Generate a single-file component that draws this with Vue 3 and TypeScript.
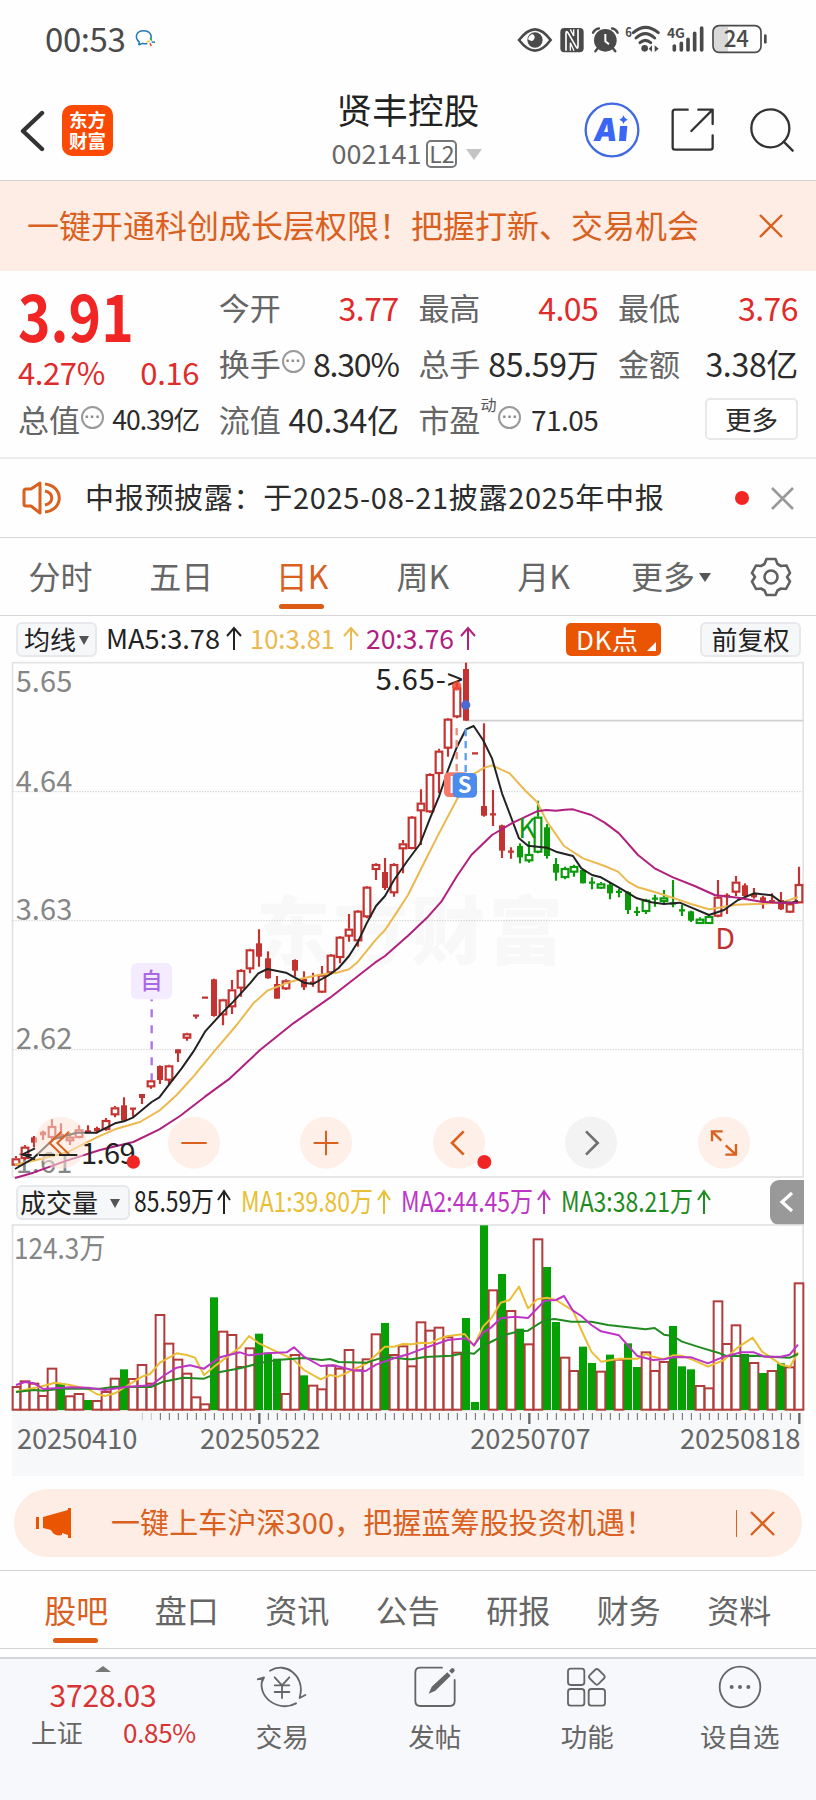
<script setup lang="ts">
type Candle = [string, number, number, number, number]
type Pt = [number, number]

// kind: h hollow, f filled, c cross; g prefix means falling colour. Values: high, body top, body bottom, low.
const early: Candle[] = [
  ['h', 918, 925, 945, 948], ['h', 885, 890, 925, 930], ['f', 858, 862, 878, 892], ['f', 842, 845, 856, 870],
  ['h', 808, 828, 862, 870], ['f', 820, 852, 866, 870], ['h', 850, 860, 872, 885], ['h', 826, 838, 862, 865],
  ['c', 826, 842, 846, 850], ['f', 830, 834, 844, 850], ['h', 804, 810, 838, 842], ['h', 768, 772, 794, 802],
  ['f', 742, 766, 812, 812], ['c', 774, 774, 778, 800], ['f', 732, 732, 744, 762], ['h', 690, 691, 710, 716],
  ['f', 646, 648, 690, 702], ['h', 644, 646, 690, 706], ['f', 598, 598, 610, 636], ['h', 548, 550, 564, 572],
  ['c', 494, 495, 499, 506], ['c', 441, 441, 445, 445], ['f', 386, 388, 498, 500], ['h', 446, 448, 494, 526],
  ['h', 390, 418, 470, 492], ['h', 358, 360, 414, 440], ['h', 296, 298, 356, 370], ['f', 238, 280, 320, 350],
  ['f', 304, 325, 385, 386], ['f', 378, 402, 446, 446], ['h', 388, 391, 416, 420], ['f', 328, 330, 362, 380],
  ['f', 364, 386, 412, 420], ['c', 368, 395, 400, 410], ['h', 348, 374, 426, 428], ['h', 312, 314, 368, 374],
  ['h', 258, 260, 322, 340], ['h', 192, 236, 258, 275], ['h', 180, 182, 272, 290], ['h', 108, 110, 200, 205],
  ['h', 40, 42, 58, 90], ['f', 24, 66, 114, 120], ['h', 40, 42, 128, 140], ['h', -30, -20, -4, 70],
]
const late: Candle[] = [
  ['h', 648, 650, 745, 748], ['h', 568, 608, 632, 735], ['h', 520, 522, 635, 638], ['h', 446, 452, 520, 580],
  ['h', 354, 356, 444, 470], ['h', 248, 262, 350, 355], ['f', 188, 207, 362, 362], ['c', 458, 458, 462, 462],
  ['f', 370, 618, 647, 650], ['c', 570, 641, 645, 678], ['f', 674, 676, 752, 774], ['c', 742, 753, 757, 776],
  ['gf', 730, 738, 772, 790], ['gh', 724, 762, 782, 788], ['gh', 602, 650, 756, 760], ['gf', 672, 682, 768, 776],
  ['gf', 774, 792, 818, 842], ['gh', 800, 804, 832, 838], ['gh', 794, 798, 816, 830], ['gf', 808, 810, 850, 850],
  ['gc', 832, 846, 850, 868], ['gh', 846, 850, 864, 866], ['gf', 848, 854, 880, 898], ['gc', 866, 873, 878, 892],
  ['gf', 874, 876, 930, 942], ['gc', 920, 934, 938, 948], ['gh', 896, 899, 934, 942], ['gc', 884, 894, 898, 920],
  ['gh', 870, 892, 904, 910], ['gf', 840, 907, 914, 922], ['gc', 914, 928, 934, 948], ['gf', 932, 934, 962, 966],
  ['gh', 952, 956, 970, 972], ['gh', 944, 948, 970, 972], ['h', 840, 890, 948, 952], ['f', 880, 884, 892, 942],
  ['h', 828, 845, 876, 888], ['f', 850, 856, 888, 890], ['f', 864, 882, 892, 896], ['f', 888, 892, 904, 926],
  ['c', 880, 900, 906, 912], ['f', 876, 900, 928, 930], ['h', 905, 910, 936, 938], ['h', 800, 852, 908, 910],
]
const candles = [...early, ...late].map((c, i) => {
  const dy = i < 44 ? 960 : 210
  const green = c[0].startsWith('g')
  return {
    x: 48 + i * 27,
    shape: c[0].slice(-1),
    color: green ? '#0a9a0a' : '#c23331',
    hi: c[1] + dy, top: c[2] + dy, bot: c[3] + dy, lo: c[4] + dy,
  }
})

const vol = [590, 573, 580, 617, 535, 580, 618, 611, 630, 632, 605, 565, 538, 566, 524, 580, 374, 460, 508, 550, 621, 642,
  322, 424, 434, 530, 474, 431, 488, 506, 611, 494, 556, 586, 597, 526, 535, 479, 540, 507, 432, 399, 494, 468,
  528, 396, 421, 412, 441, 487, 384, 636, 106, 300, 252, 362, 416, 462, 147, 231, 396, 502, 542, 470, 519, 544, 494, 508,
  460, 531, 486, 542, 515, 408, 529, 538, 587, 594, 333, 461, 405, 492, 518, 549, 542, 520, 531, 279]
const falling = new Set([5, 8, 12, 22, 27, 28, 29, 32, 41, 50, 51, 52, 54, 56, 59, 60, 63, 64, 66, 68, 69, 73, 74, 75, 81, 83, 85])

const join = (a: Pt[], b: Pt[], da: number, db: number) =>
  [...a.map(([x, y]) => `${x},${y + da}`), ...b.map(([x, y]) => `${x + 1224},${y + db}`)].join(' ')

const ma5 = join(
  [[45, 957], [100, 925], [160, 868], [230, 848], [290, 848], [345, 820], [372, 814], [400, 802], [455, 756], [478, 742], [510, 700], [545, 655], [580, 605], [615, 545], [665, 490], [700, 455], [750, 400], [775, 370], [802, 357], [858, 368], [912, 398], [939, 402], [985, 376], [1016, 354], [1047, 318], [1074, 275], [1101, 218], [1128, 168], [1155, 138], [1182, 90]],
  [[0, 780], [36, 732], [66, 655], [93, 590], [120, 510], [147, 440], [174, 388], [197, 378], [225, 420], [252, 475], [282, 580], [333, 715], [360, 737], [417, 743], [444, 755], [495, 768], [520, 805], [552, 825], [579, 832], [633, 863], [687, 895], [730, 907], [768, 912], [815, 908], [849, 922], [903, 945], [948, 930], [990, 900], [1038, 880], [1092, 886], [1119, 906], [1150, 908], [1170, 903]], 960, 210)
const ma10 = join(
  [[45, 945], [130, 925], [200, 908], [290, 862], [345, 838], [420, 816], [478, 782], [530, 735], [580, 680], [640, 607], [710, 525], [760, 460], [802, 422], [858, 400], [912, 384], [960, 374], [1010, 368], [1047, 358], [1074, 335], [1128, 268], [1155, 240], [1182, 200]],
  [[0, 885], [60, 765], [93, 700], [147, 598], [175, 545], [200, 520], [225, 505], [252, 496], [305, 520], [350, 570], [387, 606], [417, 665], [468, 738], [525, 775], [590, 798], [630, 815], [660, 845], [690, 862], [740, 876], [800, 895], [849, 912], [903, 928], [950, 920], [984, 914], [1065, 911], [1130, 905], [1170, 891]], 960, 210)
const ma20 = join(
  [[45, 984], [100, 968], [200, 932], [300, 900], [400, 876], [478, 838], [540, 798], [615, 740], [690, 685], [780, 600], [880, 520], [990, 443], [1074, 378], [1125, 338], [1155, 318]],
  [[0, 1007], [60, 950], [100, 905], [147, 828], [190, 765], [252, 705], [315, 668], [387, 634], [415, 630], [444, 632], [470, 629], [495, 628], [550, 645], [590, 668], [633, 700], [690, 765], [740, 805], [795, 832], [860, 858], [920, 885], [990, 893], [1060, 905], [1119, 909], [1170, 908]], 960, 210)
const vma1 = join(
  [[48, 605], [120, 590], [165, 578], [210, 585], [264, 597], [290, 612], [315, 618], [345, 610], [385, 585], [426, 560], [450, 552], [480, 518], [530, 490], [560, 495], [585, 503], [612, 555], [642, 530], [720, 472], [747, 438], [777, 460], [830, 485], [880, 508], [912, 540], [962, 568], [990, 555], [1016, 560], [1047, 545], [1101, 520], [1155, 470], [1182, 470], [1209, 462]],
  [[12, 463], [39, 458], [66, 460], [93, 446], [120, 438], [170, 432], [198, 468], [225, 410], [252, 382], [278, 338], [305, 330], [333, 290], [360, 355], [387, 328], [417, 323], [444, 330], [495, 362], [520, 420], [550, 485], [579, 515], [633, 506], [690, 506], [714, 492], [735, 500], [768, 508], [795, 496], [822, 497], [860, 512], [900, 530], [948, 510], [990, 472], [1034, 443], [1062, 485], [1092, 505], [1119, 524], [1146, 530], [1170, 487]], 0, 0)
const vma2 = join(
  [[48, 585], [75, 576], [102, 580], [130, 597], [210, 592], [264, 593], [315, 600], [385, 590], [453, 586], [490, 558], [530, 533], [570, 526], [612, 536], [660, 502], [720, 487], [747, 496], [800, 490], [860, 487], [882, 472], [912, 500], [962, 528], [1000, 526], [1060, 541], [1097, 543], [1128, 524], [1182, 505]],
  [[0, 493], [39, 478], [120, 450], [174, 445], [198, 466], [225, 428], [250, 412], [278, 385], [320, 380], [360, 384], [410, 332], [444, 330], [468, 318], [495, 362], [520, 378], [550, 405], [579, 424], [633, 436], [687, 497], [735, 510], [768, 508], [800, 501], [850, 502], [900, 520], [948, 500], [1000, 487], [1038, 487], [1070, 500], [1119, 500], [1145, 494], [1170, 464]], 0, 0)
const vma3 = join(
  [[48, 606], [102, 600], [130, 602], [183, 596], [300, 596], [345, 590], [453, 591], [490, 575], [550, 563], [612, 566], [660, 546], [720, 535], [777, 520], [830, 510], [912, 504], [965, 510], [990, 507], [1016, 516], [1100, 518], [1155, 500]],
  [[0, 508], [12, 508], [50, 501], [130, 497], [174, 488], [198, 491], [225, 468], [260, 450], [300, 432], [333, 424], [360, 422], [410, 390], [440, 387], [490, 395], [550, 395], [600, 405], [660, 412], [712, 418], [740, 414], [768, 434], [795, 438], [822, 455], [876, 472], [930, 488], [955, 498], [1038, 497], [1100, 501], [1146, 503], [1170, 492]], 0, 0)

const ticks = Array.from({ length: 74 }, (_, k) => k + 14)
const priceLabels = [['5.65', 487], ['4.64', 787], ['3.63', 1170], ['2.62', 1557], ['1.61', 1930]] as const
const dates = [['20250410', 54], ['20250522', 603], ['20250707', 1414], ['20250818', 2043]] as const
const periods = ['分时', '五日', '日K', '周K', '月K']
const sections = ['股吧', '盘口', '资讯', '公告', '研报', '财务', '资料']
</script>

<template>
  <main class="page">
    <div class="status">
      <span class="clock">00:53</span>
      <svg class="chat" width="22" height="20" viewBox="0 0 66 60" fill="none" stroke-width="4.5">
        <path d="M14 48L16 40C-2 22 10 5 29 5S56 20 49 32M14 48L26 43Q34 46 40 43" stroke="#2479b8" />
        <path d="M49 26l4 9" stroke="#45a83b" /><path d="M53 39l10 1" stroke="#2479b8" />
        <path d="M38 38l10-1" stroke="#f2c230" /><path d="M48 42l4 10" stroke="#e05a2b" />
      </svg>
      <svg class="sys" width="316" height="66" viewBox="0 0 948 198" fill="#4a4a4a">
        <path d="M57 90Q82 58 105 58T152 90Q128 122 105 122T57 90Z" fill="none" stroke="#4a4a4a" stroke-width="8" />
        <circle cx="105" cy="90" r="23" /><path d="M84 88Q98 98 102 88Q108 80 98 72Q86 76 84 88Z" fill="#fff" />
        <rect x="181" y="54" width="70" height="73" rx="12" />
        <path d="M198 122V70Q198 60 205 70L228 110Q234 120 234 108V58" fill="none" stroke="#fff" stroke-width="5" />
        <path d="M211 58L221 78V58M211 122V98L222 122" fill="none" stroke="#fff" stroke-width="4" />
        <circle cx="316" cy="91" r="34" /><path d="M316 72V94L327 103" fill="none" stroke="#fff" stroke-width="6" />
        <path d="M279 68Q284 57 297 55M336 55Q348 57 353 68M294 114L286 124M338 114L346 124" fill="none" stroke="#4a4a4a" stroke-width="7" stroke-linecap="round" />
        <text x="376" y="82" font-size="38" font-weight="700" textLength="20" lengthAdjust="spacingAndGlyphs">6</text>
        <g fill="none" stroke="#4a4a4a" stroke-width="9" stroke-linecap="round">
          <path d="M400 68Q436 36 475 68M408 84Q436 58 464 84M420 98Q436 84 452 98" />
        </g>
        <circle cx="434" cy="115" r="10" /><path d="M456 106v20l-10-10zM464 106v20l12-10z" />
        <text x="501" y="83" font-size="40" font-weight="700" textLength="54" lengthAdjust="spacingAndGlyphs">4G</text>
        <g stroke="#4a4a4a" stroke-width="11" stroke-linecap="round"><path d="M523 108V120M544 100V120M564 88V120M584 70V120M605 54V120" /></g>
        <path d="M650 50H684V125H650Q640 125 640 112V62Q640 50 650 50Z" fill="#d9d9d9" />
        <rect x="639" y="47" width="144" height="80" rx="18" fill="none" stroke="#4a4a4a" stroke-width="5" />
        <path d="M796 77V97" stroke="#4a4a4a" stroke-width="8" stroke-linecap="round" />
        <text x="671" y="112" font-size="69" font-weight="500" textLength="76" lengthAdjust="spacingAndGlyphs">24</text>
      </svg>
    </div>

    <header class="head">
      <div class="head-left">
        <svg width="25" height="42" viewBox="0 0 25 42" fill="none" stroke="#333" stroke-width="4.4" stroke-linecap="round" stroke-linejoin="round"><path d="M22 3L3 21L22 39" /></svg>
        <div class="logo"><span>东方</span><span>财富</span></div>
      </div>
      <div class="title">
        <h1>贤丰控股</h1>
        <p><span>002141</span><b>L2</b><i></i></p>
      </div>
      <div class="head-right">
        <svg width="56" height="56" viewBox="0 0 168 168">
          <circle cx="84" cy="84" r="79" fill="none" stroke="#4169e1" stroke-width="7" />
          <text x="30" y="116" font-size="92" font-weight="900" font-style="italic" font-family="Inter, sans-serif" fill="#3b66f5" textLength="70" lengthAdjust="spacingAndGlyphs">A</text>
          <path d="M108 72H130L126 117H105Z M119 40Q121 50 132 53Q121 56 119 66Q116 56 106 53Q116 50 119 40Z" fill="#3b66f5" />
        </svg>
        <svg width="44" height="44" viewBox="0 0 132 132" fill="none" stroke="#333" stroke-width="7" stroke-linecap="round" stroke-linejoin="round"><path d="M50 5H12Q5 5 5 12V118Q5 125 12 125H118Q125 125 125 118V82M82 5H125V48M125 5L61 69" /></svg>
        <svg width="46" height="46" viewBox="0 0 138 138" fill="none" stroke="#333" stroke-width="7" stroke-linecap="round"><circle cx="64" cy="64" r="57" /><path d="M104 104L131 131" /></svg>
      </div>
    </header>

    <div class="banner">
      <span>一键开通科创成长层权限！把握打新、交易机会</span>
      <svg width="24" height="24" viewBox="0 0 24 24" stroke="#d9601f" stroke-width="2.4"><path d="M1 1L23 23M23 1L1 23" /></svg>
    </div>

    <section class="quote">
      <div class="main-price">
        <div class="big"><span>3.91</span></div>
        <div class="delta"><span>4.27%</span><span>0.16</span></div>
      </div>
      <div class="cell"><label>今开</label><em class="red">3.77</em></div>
      <div class="cell"><label>最高</label><em class="red">4.05</em></div>
      <div class="cell"><label>最低</label><em class="red">3.76</em></div>
      <div class="cell"><label>换手</label><i class="more-dot">···</i><em class="pct">8.30%</em></div>
      <div class="cell"><label>总手</label><em>85.59万</em></div>
      <div class="cell"><label>金额</label><em>3.38亿</em></div>
      <div class="cell"><label>总值</label><i class="more-dot">···</i><em class="small">40.39亿</em></div>
      <div class="cell"><label>流值</label><em>40.34亿</em></div>
      <div class="cell"><label>市盈</label><sup>动</sup><i class="more-dot">···</i><em class="small pe">71.05</em></div>
      <div class="cell end"><button class="more">更多</button></div>
    </section>

    <section class="notice">
      <svg width="40" height="34" viewBox="0 0 40 34" fill="none" stroke="#d9601f" stroke-width="3" stroke-linejoin="round"><path d="M2 10Q2 8 4 8H9L18 2V32L9 25H4Q2 25 2 23ZM23 3C42 5 42 29 23 31M23 10C32 12 32 22 23 24" /></svg>
      <span>中报预披露：于2025-08-21披露2025年中报</span>
      <i></i>
      <svg width="23" height="23" viewBox="0 0 23 23" stroke="#999" stroke-width="2.6"><path d="M1 1L22 22M22 1L1 22" /></svg>
    </section>

    <nav class="periods">
      <span v-for="p in periods" :key="p" :class="{ on: p === '日K' }">{{ p }}</span>
      <span class="drop">更多<i></i></span>
      <svg width="42" height="42" viewBox="0 0 42 42" fill="none" stroke="#606060" stroke-width="2.6" stroke-linejoin="round">
        <path d="M16.5 3H25.5L27.5 8L31 10L36.5 9.5L40 17L37 21L40 25.5L36 33L31 32.5L27.5 34.5L25.5 39H16.5L14.5 34.5L11 32.5L6 33L2 25.5L5 21L2 17L6 9.5L11 10L14.5 8Z" /><circle cx="21" cy="21" r="6.5" />
      </svg>
    </nav>

    <div class="ma-row">
      <button class="chip ma-chip">均线<i></i></button>
      <svg class="ma-text" width="380" height="46" viewBox="0 0 380 46" font-size="27">
        <text x="7" y="33" fill="#222" textLength="114" lengthAdjust="spacingAndGlyphs">MA5:3.78</text>
        <text x="151" y="33" fill="#ebb94f" textLength="85" lengthAdjust="spacingAndGlyphs">10:3.81</text>
        <text x="267" y="33" fill="#b0207e" textLength="88" lengthAdjust="spacingAndGlyphs">20:3.76</text>
        <g fill="none" stroke-width="2"><path d="M135 34V12M128 20L135 12L142 20" stroke="#222" /><path d="M252 34V12M245 20L252 12L259 20" stroke="#ebb94f" /><path d="M369 34V12M362 20L369 12L376 20" stroke="#b0207e" /></g>
      </svg>
      <button class="dk">DK点<i></i></button>
      <button class="chip adj">前复权</button>
    </div>

    <svg class="kline" width="816" height="520" viewBox="0 390 2448 1560">
      <text x="768" y="1284" font-size="222" font-weight="900" fill="#f8f8f8" textLength="920">东方财富</text>
      <rect x="37.500" y="398" width="2372" height="1543" fill="none" stroke="#e3e3e3" stroke-width="5" />
      <path d="M38 785H2408M38 1172H2408M38 1559H2408" stroke="#cfcfcf" stroke-width="3" stroke-dasharray="4 4" />
      <path d="M1398 572H2408" stroke="#cfcfcf" stroke-width="5" />
      <g font-size="87" fill="#868686"><text v-for="l in priceLabels" :key="l[0]" x="47" :y="l[1]" textLength="170">{{ l[0] }}</text></g>
      <g v-for="(c, i) in candles" :key="i" :stroke="c.color" stroke-width="6.500">
        <template v-if="c.shape === 'h'">
          <path :d="`M${c.x} ${c.hi}V${c.top}M${c.x} ${c.bot}V${c.lo}`" />
          <rect :x="c.x - 10" :y="c.top + 3" width="20" :height="Math.max(c.bot - c.top - 4, 7)" fill="#fff" />
        </template>
        <template v-else-if="c.shape === 'f'">
          <path :d="`M${c.x} ${c.hi}V${c.lo}`" />
          <rect :x="c.x - 9" :y="c.top" width="18" :height="c.bot - c.top" :fill="c.color" stroke="none" />
        </template>
        <path v-else :d="`M${c.x} ${c.hi}V${c.lo}M${c.x - 9} ${(c.top + c.bot) / 2}H${c.x + 9}`" />
      </g>
      <g fill="none" stroke-linejoin="round" stroke-width="6">
        <polyline :points="ma10" stroke="#ebb94f" /><polyline :points="ma5" stroke="#222" /><polyline :points="ma20" stroke="#b0207e" />
      </g>
      <text x="1127" y="480" font-size="87" fill="#222" textLength="262">5.65-&gt;</text>
      <circle cx="1370" cy="468" r="14" fill="#f2452f" opacity=".85" /><circle cx="1397" cy="525" r="14" fill="#4a6bd4" />
      <path d="M1370 594V728" stroke="#f08a78" stroke-width="7" stroke-dasharray="22 14" />
      <path d="M1397 597V728" stroke="#5b9df0" stroke-width="7" stroke-dasharray="22 14" />
      <rect x="1332" y="727" width="72" height="74" rx="14" fill="#f57a68" />
      <text x="1346" y="788" font-size="66" font-weight="700" fill="#fff">B</text>
      <rect x="1358" y="729" width="73" height="74" rx="14" fill="#4b8cec" />
      <text x="1373" y="788" font-size="66" font-weight="700" fill="#fff">S</text>
      <text x="1555" y="924" font-size="82" fill="#0a9a0a">K</text>
      <text x="2146" y="1256" font-size="86" fill="#bd3331">D</text>
      <path d="M455 1408V1650" stroke="#ac73e6" stroke-width="7" stroke-dasharray="24 24" stroke-dashoffset="18" />
      <rect x="393" y="1299" width="123" height="109" rx="18" fill="#f5ebff" />
      <text x="421" y="1376" font-size="67" font-weight="500" fill="#a968e6">自</text>
      <g fill="#fde4d6" fill-opacity=".55">
        <circle cx="182" cy="1838" r="78" /><circle cx="582" cy="1838" r="78" /><circle cx="978" cy="1838" r="78" /><circle cx="1377" cy="1838" r="78" /><circle cx="2172" cy="1838" r="78" />
      </g>
      <circle cx="1773" cy="1838" r="78" fill="#f3f3f3" />
      <g fill="none" stroke="#d9601f" stroke-width="6">
        <path d="M184 1805L149 1839L184 1873M207 1805L172 1839L207 1873" />
        <path d="M544 1839H620M941 1839H1015M978 1802V1876" /><path d="M1391 1804L1356 1839L1391 1874" stroke-width="8" />
        <path d="M2136 1834V1804H2168M2136 1804L2164 1832M2177 1846L2208 1874M2176 1874H2208V1842" stroke-width="7" />
      </g>
      <path d="M1758 1804L1793 1839L1758 1874" fill="none" stroke="#707070" stroke-width="8" />
      <path d="M105 1855L68 1873L105 1888M68 1875H95M117 1875H165M177 1875H232" fill="none" stroke="#222" stroke-width="6" />
      <text x="243" y="1902" font-size="87" fill="#222" textLength="164">1.69</text>
      <circle cx="400" cy="1896" r="20" fill="#f02524" /><circle cx="1453" cy="1896" r="21" fill="#f02524" />
    </svg>

    <div class="vol-row">
      <button class="chip vol-chip">成交量<i></i></button>
      <svg class="vol-text" width="588" height="44" viewBox="0 0 588 44" font-size="28">
        <text x="3" y="32" fill="#222" textLength="80" lengthAdjust="spacingAndGlyphs">85.59万</text>
        <text x="110" y="32" fill="#eabf35" textLength="132" lengthAdjust="spacingAndGlyphs">MA1:39.80万</text>
        <text x="270" y="32" fill="#bd35c4" textLength="132" lengthAdjust="spacingAndGlyphs">MA2:44.45万</text>
        <text x="430" y="32" fill="#1e8b1e" textLength="132" lengthAdjust="spacingAndGlyphs">MA3:38.21万</text>
        <g fill="none" stroke-width="2"><path d="M93 34V11M87 20L93 11L99 20" stroke="#222" /><path d="M253 34V11M247 20L253 11L259 20" stroke="#eabf35" /><path d="M413 34V11M407 20L413 11L419 20" stroke="#bd35c4" /><path d="M573 34V11M567 20L573 11L579 20" stroke="#1e8b1e" /></g>
      </svg>
      <button class="fold"><svg width="16" height="24" viewBox="0 0 16 24" fill="none" stroke="#fff" stroke-width="3.2"><path d="M13 3L3 12L13 21" /></svg></button>
    </div>

    <svg class="volume" width="816" height="252" viewBox="0 102 2448 756">
      <rect x="36" y="662" width="2376" height="196" fill="#f7f8fa" />
      <rect x="37.500" y="105" width="2372" height="556" fill="none" stroke="#e3e3e3" stroke-width="5" />
      <text x="42" y="207" font-size="87" fill="#868686" textLength="274" lengthAdjust="spacingAndGlyphs">124.3万</text>
      <template v-for="(v, i) in vol" :key="i">
        <rect v-if="falling.has(i)" :x="36 + i * 27" :y="v" width="24" :height="660 - v" fill="#04a004" />
        <rect v-else :x="i === 0 ? 38 : 35 + i * 27" :y="v + 1" :width="i === 0 ? 23 : 26" :height="658 - v" fill="#fff" stroke="#b23b3b" stroke-width="6" />
      </template>
      <g fill="none" stroke-linejoin="round" stroke-width="6">
        <polyline :points="vma1" stroke="#eabf35" /><polyline :points="vma3" stroke="#218a21" /><polyline :points="vma2" stroke="#bd35c4" />
      </g>
      <path v-for="t in ticks" :key="t" :d="`M${49 + t * 27} 669V${[27, 57, 87].includes(t) ? 702 : 690}`" stroke="#666" :stroke-width="[27, 57, 87].includes(t) ? 7 : 3" :opacity="t < 16 ? 0.35 : 1" />
      <g font-size="82" fill="#666"><text v-for="d in dates" :key="d[0]" :x="d[1] - 3" y="777" textLength="361">{{ d[0] }}</text></g>
    </svg>

    <div class="promo">
      <svg width="36" height="30" viewBox="0 0 36 30" fill="#ea5504"><path d="M0 9h3v12H0zM7 9L32 2V0h3v30h-3v-3L26 25V27Q18 29 15 22L7 20Z" /></svg>
      <span>一键上车沪深300，把握蓝筹股投资机遇！</span>
      <i></i>
      <svg class="px" width="25" height="25" viewBox="0 0 25 25" stroke="#d9601f" stroke-width="2.400"><path d="M1 1L24 24M24 1L1 24" /></svg>
    </div>

    <nav class="sections"><span v-for="s in sections" :key="s" :class="{ on: s === '股吧' }">{{ s }}</span></nav>
    <div class="gap"></div>

    <footer class="dock">
      <div class="index">
        <i></i>
        <strong>3728.03</strong>
        <p><span>上证</span><em>0.85%</em></p>
      </div>
      <div class="tool">
        <svg width="50" height="46" viewBox="0 0 150 138" fill="none" stroke="#666" stroke-width="5.500" stroke-linecap="round" stroke-linejoin="round">
          <path d="M39 20C85 -8 142 34 130 92M130 92L128 102L145 93M117 118C64 147 -2 98 17 44M1 46L21 40L17 50" />
          <path d="M53 40L75 64L97 40M75 64V102M53 64H97M53 84H97" />
        </svg><span>交易</span>
      </div>
      <div class="tool">
        <svg width="50" height="46" viewBox="0 0 150 138" fill="none" stroke="#666" stroke-width="5.500" stroke-linecap="round">
          <path d="M96 11H31Q16 11 16 26V111Q16 126 31 126H119Q134 126 134 111V48" />
          <path d="M56 89L65 68L112 25L122 35L76 80ZM117 20L126 12Q134 12 134 21L126 29Z" fill="#666" stroke="none" />
        </svg><span>发帖</span>
      </div>
      <div class="tool">
        <svg width="50" height="46" viewBox="0 0 150 138" fill="none" stroke="#666" stroke-width="5.500">
          <rect x="18" y="14" width="49" height="49" rx="8" /><rect x="18" y="75" width="49" height="50" rx="8" /><rect x="80" y="75" width="49" height="50" rx="8" /><rect x="86" y="20" width="37" height="37" rx="7" transform="rotate(45 104.500 38.500)" />
        </svg><span>功能</span>
      </div>
      <div class="tool">
        <svg width="50" height="46" viewBox="0 0 150 138" fill="none" stroke="#666" stroke-width="5.500">
          <circle cx="75" cy="69" r="61" /><g fill="#666" stroke="none"><circle cx="50" cy="69" r="6" /><circle cx="75" cy="69" r="6" /><circle cx="100" cy="69" r="6" /></g>
        </svg><span>设自选</span>
      </div>
    </footer>
  </main>
</template>

<style>
body { margin: 0; background: #fff; }
</style>

<style scoped>
.page { width: 816px; height: 1800px; overflow: hidden; background: #fefefe; color: #2b2b2b; font-family: "Noto Sans CJK SC", "Noto Sans", sans-serif; }
.page * { box-sizing: border-box; }
svg { display: block; flex: none; }
i, em { font-style: normal; }
button { font-family: inherit; padding: 0; white-space: nowrap; }
.status { height: 76px; display: flex; align-items: flex-start; padding-left: 45px; }
.clock { font-size: 33px; line-height: 40px; margin-top: 18px; width: 89px; color: #4a4a4a; letter-spacing: -.4px; }
.chat { margin-top: 29px; }
.sys { margin: 10px 0 0 auto; }
.head { height: 105px; border-bottom: 1px solid #d4d4d8; display: grid; grid-template-columns: 300px 216px 300px; }
.head-left { display: flex; align-items: center; padding: 4px 0 0 20px; gap: 17px; height: 105px; }
.logo { width: 51px; height: 51px; border-radius: 10px; background: #fb4a04; color: #fff; font-size: 18.500px; line-height: 21px; font-weight: 700; display: flex; flex-direction: column; align-items: center; justify-content: center; padding-bottom: 2px; }
.title { text-align: center; }
.title h1 { margin: 12px 0 0; font-size: 35.500px; line-height: 42px; font-weight: 400; color: #222; letter-spacing: .2px; }
.title p { margin: 7px 0 0; display: flex; justify-content: center; align-items: center; height: 34px; font-size: 27px; color: #666; }
.title p span { line-height: 34px; margin-top: -2px; margin-left: -2px; }
.title b { margin: 0 9px 0 5px; border: 2px solid #777; border-radius: 5px; width: 31px; height: 28px; font-size: 23px; line-height: 22px; font-weight: 400; }
.title p i { border: 8px solid transparent; border-top: 11px solid #c4c4c4; border-bottom: 0; }
.head-right { display: flex; align-items: center; padding: 3px 0 0 68px; height: 105px; }
.head-right svg:nth-child(2) { margin-left: 31px; }
.head-right svg:nth-child(3) { margin-left: 34px; }
.banner { height: 90px; background: #fdede4; color: #d9601f; display: flex; align-items: center; justify-content: space-between; padding: 0 33px 0 27px; font-size: 32px; }
.banner span { line-height: 40px; margin-top: -5px; white-space: nowrap; }
.quote { height: 188px; border-bottom: 2px solid #ececec; padding: 8px 18px 0; display: grid; grid-template-columns: 181px 180px 180px 180px; column-gap: 19.700px; grid-template-rows: repeat(3, 56px); }
.main-price { grid-row: span 2; }
.big { height: 75px; color: #f02524; }
.big span { display: inline-block; font-size: 65px; line-height: 72px; font-weight: 700; transform: translateY(-1px) scaleX(.85); transform-origin: 0 0; }
.delta { display: flex; justify-content: space-between; font-size: 31px; line-height: 36px; color: #e02b2b; letter-spacing: -.4px; }
.cell { display: flex; align-items: center; font-size: 32px; line-height: 40px; white-space: nowrap; position: relative; }
.cell label { font-size: 31px; color: #666; }
.cell em { margin-left: auto; letter-spacing: -.3px; font-size: 32px; }
.cell .pct { letter-spacing: -1.200px; }
.cell .red { color: #e02b2b; letter-spacing: -.5px; font-size: 32px; }
.cell .small { font-size: 26.500px; letter-spacing: -1px; }
.cell .pe { font-size: 28px; letter-spacing: -.5px; }
.cell sup { position: absolute; left: 62px; top: 1px; font-size: 16px; line-height: 24px; color: #555; }
.cell sup + .more-dot { margin-left: 18px; }
.more-dot { width: 23px; height: 23px; margin-left: 1px; margin-top: -3px; border: 2px solid #999; border-radius: 50%; font-size: 16px; line-height: 17px; text-align: center; color: #888; letter-spacing: 0; font-weight: 700; font-family: "Liberation Sans", sans-serif; }
.end { justify-content: flex-end; }
.more { width: 93px; height: 42px; border: 2px solid #e8e8ea; border-radius: 5px; background: #fff; font-size: 26.500px; line-height: 34px; color: #2b2b2b; }
.notice { height: 79px; border-bottom: 1px solid #d6d6d6; display: flex; align-items: center; padding: 0 22px; }
.notice span { margin: -5px 0 0 23px; font-size: 29px; letter-spacing: .7px; white-space: nowrap; width: 651px; }
.notice i { width: 14px; height: 14px; flex: none; border-radius: 50%; background: #f02524; margin-right: 22px; }
.periods { height: 78px; border-bottom: 1px solid #d6d6d6; display: flex; align-items: center; color: #666; font-size: 32px; }
.periods span { width: 120.800px; text-align: center; position: relative; line-height: 44px; margin-top: -4px; }
.periods .on, .sections .on { color: #d9601f; }
.periods .on::after, .sections .on::after { content: ""; position: absolute; left: 50%; width: 45px; height: 5px; margin-left: -23px; bottom: -12px; border-radius: 3px; background: #dc5c14; }
.periods .drop { width: 144px; text-align: left; padding-left: 27px; }
.drop i { display: inline-block; border: 6px solid transparent; border-top: 9px solid #555; border-bottom: 0; vertical-align: 7px; margin-left: 4px; }
.periods svg { margin-left: 2px; }
.ma-row { height: 44px; display: flex; align-items: center; padding: 2px 15px 0 16px; }
.chip { height: 35px; border: 2px solid #e6e8eb; border-radius: 6px; background: #f6f7f9; color: #222; font-size: 26px; line-height: 28px; }
.chip i { display: inline-block; border: 5.500px solid transparent; border-top: 9px solid #555; border-bottom: 0; vertical-align: 5px; margin-left: 3px; }
.ma-chip { width: 81px; }
.ma-text { margin-left: 2px; }
.dk { margin-left: 87px; width: 95px; height: 33px; background: #ea5504; color: #fff; border: 0; border-radius: 5px; font-size: 26px; line-height: 28px; letter-spacing: .6px; text-align: left; padding-left: 10px; position: relative; }
.dk i { position: absolute; right: 5px; bottom: 5px; border-left: 9px solid transparent; border-bottom: 9px solid #fff; }
.adj { margin-left: 39px; width: 101px; }
.vol-row { height: 44px; display: flex; align-items: center; padding-left: 16px; }
.vol-chip { width: 114px; text-align: left; padding-left: 2px; }
.vol-chip i { margin: 0 0 0 12px; }
.vol-text { margin-left: 1px; }
.fold { margin-left: auto; margin-right: 12px; width: 34px; height: 45px; background: #999; border: 0; border-radius: 9px 0 0 9px; padding-left: 9px; }
.promo { margin: 13px 14px; height: 68px; border-radius: 34px; background: #fdede4; color: #d9601f; display: flex; align-items: center; padding-left: 22px; font-size: 29px; }
.promo span { margin: -4px 0 0 39px; width: 625px; line-height: 40px; white-space: nowrap; letter-spacing: .1px; }
.promo i { width: 1px; height: 27px; background: #d9601f; margin-right: 13px; }
.sections { height: 79px; border-top: 1px solid #d4d4d8; border-bottom: 1px solid #d4d4d8; display: flex; align-items: center; padding: 0 21px; font-size: 32px; color: #666; }
.sections span { width: 110.500px; text-align: center; position: relative; line-height: 44px; margin-top: -2px; }
.gap { height: 8px; }
.dock { height: 143px; background: #f7f8fb; border-top: 2px solid #d4d5da; display: flex; }
.index { width: 206px; color: #d83434; text-align: center; padding-top: 7px; }
.index i { display: block; width: 16px; border: 8px solid transparent; border-bottom: 6px solid #777; border-top: 0; margin: 0 auto; }
.index strong { display: block; font-weight: 400; font-size: 30px; line-height: 44px; letter-spacing: -.2px; }
.index p { display: flex; justify-content: space-between; margin: -4px 10px 0 31px; font-size: 26px; line-height: 40px; letter-spacing: -.3px; }
.index p span { color: #666; }
.tool { width: 152.500px; text-align: center; font-size: 26.500px; line-height: 38px; color: #666; padding-top: 5px; }
.tool svg { margin: 0 auto 7px; }
</style>
